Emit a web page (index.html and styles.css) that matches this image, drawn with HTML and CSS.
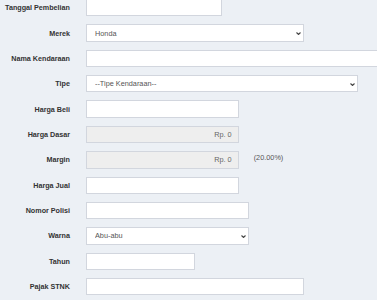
FILE: index.html
```html
<!DOCTYPE html>
<html lang="id">
<head>
    <meta charset="UTF-8">
    <meta name="viewport" content="width=device-width, initial-scale=1.0">
    <title>Tambah Kendaraan</title>
    <link rel="stylesheet" href="styles.css">
</head>
<body>
    <form class="form-horizontal">
        <label class="control-label" for="tanggal">Tanggal Pembelian</label>
        <div class="field"><input class="form-control w-sm" id="tanggal" type="text"></div>

        <label class="control-label" for="merek">Merek</label>
        <div class="field">
            <div class="select-wrap w-lg">
                <select class="form-control" id="merek">
                    <option>Honda</option>
                </select>
                <svg class="caret" width="5" height="3" viewBox="0 0 5 3"><path d="M0.5 0.5 L2.5 2.5 L4.5 0.5" fill="none" stroke="#444" stroke-width="1.1"/></svg>
            </div>
        </div>

        <label class="control-label" for="nama">Nama Kendaraan</label>
        <div class="field"><input class="form-control w-full" id="nama" type="text"></div>

        <label class="control-label" for="tipe">Tipe</label>
        <div class="field">
            <div class="select-wrap w-xl">
                <select class="form-control" id="tipe">
                    <option>--Tipe Kendaraan--</option>
                </select>
                <svg class="caret" width="5" height="3" viewBox="0 0 5 3"><path d="M0.5 0.5 L2.5 2.5 L4.5 0.5" fill="none" stroke="#444" stroke-width="1.1"/></svg>
            </div>
        </div>

        <label class="control-label" for="beli">Harga Beli</label>
        <div class="field"><input class="form-control w-md" id="beli" type="text"></div>

        <label class="control-label" for="dasar">Harga Dasar</label>
        <div class="field"><input class="form-control w-md money" id="dasar" type="text" value="Rp. 0" disabled></div>

        <label class="control-label" for="margin">Margin</label>
        <div class="field">
            <input class="form-control w-md money" id="margin" type="text" value="Rp. 0" disabled>
            <span class="help">(20.00%)</span>
        </div>

        <label class="control-label" for="jual">Harga Jual</label>
        <div class="field"><input class="form-control w-md" id="jual" type="text"></div>

        <label class="control-label" for="polisi">Nomor Polisi</label>
        <div class="field"><input class="form-control w-md2" id="polisi" type="text"></div>

        <label class="control-label" for="warna">Warna</label>
        <div class="field">
            <div class="select-wrap w-md2">
                <select class="form-control" id="warna">
                    <option>Abu-abu</option>
                </select>
                <svg class="caret" width="5" height="3" viewBox="0 0 5 3"><path d="M0.5 0.5 L2.5 2.5 L4.5 0.5" fill="none" stroke="#444" stroke-width="1.1"/></svg>
            </div>
        </div>

        <label class="control-label" for="tahun">Tahun</label>
        <div class="field"><input class="form-control w-xs" id="tahun" type="text"></div>

        <label class="control-label" for="stnk">Pajak STNK</label>
        <div class="field"><input class="form-control w-lg" id="stnk" type="text"></div>
    </form>
</body>
</html>
```

FILE: styles.css
```css
body {
    margin: 0;
    background: #ecf0f5;
    font-family: 'Liberation Sans', Arial, sans-serif;
    color: #333;
    overflow: hidden;
}

.form-horizontal {
    display: grid;
    grid-template-columns: 70px 1fr;
    grid-auto-rows: 17.37px;
    column-gap: 16px;
    row-gap: 8px;
    margin-top: -1px;
    overflow: hidden;
}

.control-label {
    font-size: 7.2px;
    font-weight: bold;
    line-height: 9px;
    text-align: right;
    white-space: nowrap;
    align-self: center;
    color: #333;
}

.field {
    display: flex;
    align-items: flex-start;
    gap: 15px;
    min-width: 0;
}

.form-control {
    display: block;
    box-sizing: border-box;
    height: 17.37px;
    margin: 0;
    padding: 0 8px;
    border: 1px solid #d2d6de;
    border-radius: 0;
    background: #fff;
    font-family: inherit;
    font-size: 7.3px;
    color: #555;
    outline: none;
    flex-shrink: 0;
}

.form-control:disabled {
    background: #eee;
    color: #666;
}

.money {
    text-align: right;
    padding-right: 6px;
}

.select-wrap {
    position: relative;
    flex-shrink: 0;
    height: 17.37px;
}

.select-wrap select {
    width: 100%;
    appearance: none;
    -webkit-appearance: none;
}

.caret {
    position: absolute;
    right: 3px;
    top: 7.5px;
}

.help {
    font-size: 7.3px;
    line-height: 9px;
    color: #555;
    padding-top: 1.5px;
    white-space: nowrap;
}

.w-xs { width: 108.7px; }
.w-sm { width: 136.3px; }
.w-md { width: 152.7px; }
.w-md2 { width: 163.3px; }
.w-lg { width: 218.3px; }
.w-xl { width: 272.3px; }
.w-full { width: 320px; }
```
